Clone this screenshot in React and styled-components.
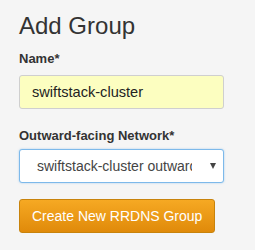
import React from "react";
import styled, { createGlobalStyle } from "styled-components";

const GlobalStyle = createGlobalStyle`
  html, body {
    margin: 0;
    background: #f5f5f5;
  }
  body {
    font-family: "Liberation Sans", Arial, sans-serif;
    color: #333;
  }
`;

const Page = styled.div`
  display: flex;
  flex-direction: column;
  align-items: flex-start;
  padding: 13px 0 0 19px;
  min-height: 250px;
  box-sizing: border-box;
`;

const Title = styled.h1`
  margin: 0 0 10px;
  font-size: 24px;
  line-height: 26px;
  font-weight: 400;
  color: #333;
`;

const Label = styled.label`
  display: block;
  font-size: 13px;
  line-height: 20px;
  font-weight: 700;
  color: #333;
  margin-bottom: ${(p) => p.$gap}px;
`;

const Field = styled.div`
  display: flex;
  flex-direction: column;
  margin-bottom: ${(p) => p.$gap}px;
`;

const TextInput = styled.input`
  box-sizing: border-box;
  width: 205px;
  height: 34px;
  padding: 0 12px;
  border: 1px solid #cfcfcf;
  border-radius: 3px;
  background: #fcfec0;
  font-family: inherit;
  font-size: 14.6px;
  color: #222;
  outline: none;
`;

const SelectWrap = styled.div`
  position: relative;
  width: 205px;
`;

const Select = styled.select`
  appearance: none;
  -webkit-appearance: none;
  box-sizing: border-box;
  width: 205px;
  height: 34px;
  padding: 0 31px 0 17px;
  border: 1px solid #7db9ea;
  border-radius: 3px;
  box-shadow: 0 0 2px rgba(102, 175, 233, 0.6);
  background: #fff;
  font-family: inherit;
  font-size: 14px;
  color: #444;
  outline: none;
`;

const Caret = styled.span`
  position: absolute;
  right: 8px;
  top: 14px;
  width: 0;
  height: 0;
  border-left: 3.5px solid transparent;
  border-right: 3.5px solid transparent;
  border-top: 6px solid #444;
  pointer-events: none;
`;

const Button = styled.button`
  box-sizing: border-box;
  height: 34px;
  padding: 0 12px;
  border: 1px solid #c8830c;
  border-radius: 3px;
  background: linear-gradient(to bottom, #f6a923, #e08a0a);
  color: #fff;
  font-family: inherit;
  font-size: 14px;
  cursor: pointer;
`;

const App = () => {
  return (
    <Page>
      <GlobalStyle />
      <Title>Add Group</Title>
      <Field $gap={17}>
        <Label $gap={6}>Name*</Label>
        <TextInput defaultValue="swiftstack-cluster" />
      </Field>
      <Field $gap={16}>
        <Label $gap={3}>Outward-facing Network*</Label>
        <SelectWrap>
          <Select defaultValue="outward">
            <option value="outward">swiftstack-cluster outward-facing</option>
          </Select>
          <Caret />
        </SelectWrap>
      </Field>
      <Button>Create New RRDNS Group</Button>
    </Page>
  );
};

export default App;
